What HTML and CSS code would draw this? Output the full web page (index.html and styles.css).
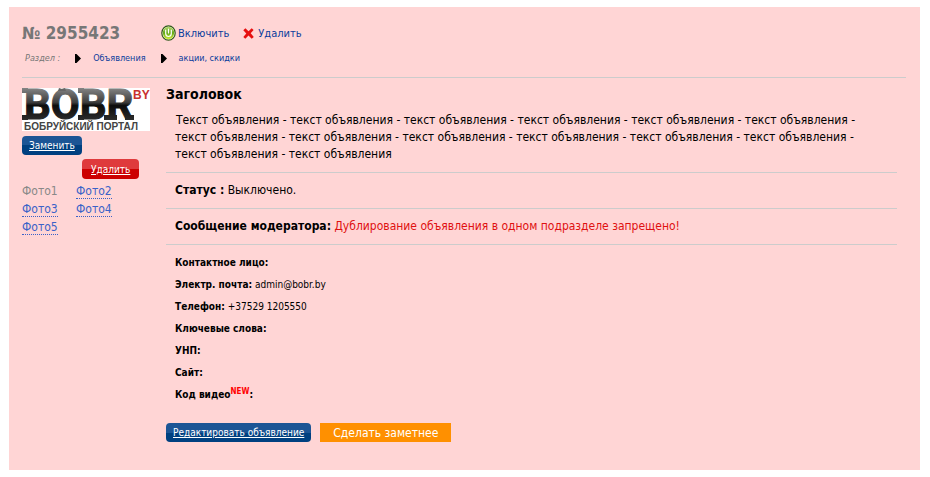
FILE: index.html
```html
<!DOCTYPE html>
<html lang="ru">

<head>
    <meta charset="UTF-8">
    <meta name="viewport" content="width=device-width, initial-scale=1.0">

    <title>Объявление № 2955423</title>
    <link rel="stylesheet" href="styles.css">
</head>

<body>

    <div class="card">
        <header class="card-header">
            <div class="title-row">
                <h1>№ 2955423</h1>
                <a href="#" class="action">
                    <svg class="icon-power" viewBox="0 0 15 16" aria-hidden="true">
                        <defs>
                            <linearGradient id="power" x1="0" y1="0" x2="0" y2="1">
                                <stop offset="0" stop-color="#b4d870" />
                                <stop offset="0.5" stop-color="#62a818" />
                                <stop offset="1" stop-color="#d2f03c" />
                            </linearGradient>
                        </defs>
                        <ellipse cx="7.5" cy="8" rx="6.7" ry="7.2" fill="#f4fbd0" stroke="#31571c" stroke-width="1.2" />
                        <ellipse cx="7.5" cy="8" rx="5.6" ry="6.2" fill="url(#power)" />
                        <path d="M4.7 5v3.6a2.8 2.9 0 0 0 5.6 0V5M7.5 4v4" fill="none" stroke="#fff" stroke-width="1.2" stroke-linecap="round" />
                    </svg>
                    Включить
                </a>
                <a href="#" class="action action-delete">
                    <svg class="icon-cross" viewBox="0 0 11 11" aria-hidden="true">
                        <path d="M2.4 0.3 5.5 3.2 8.7 0.3 10.6 1.9 7.7 5.3 10.8 9 8.7 10.8 5.5 7.6 2.3 10.8 0.3 8.9 3.3 5.4 0.3 2.2z" fill="#e60f0f" />
                    </svg>
                    Удалить
                </a>
            </div>
            <nav class="breadcrumbs">
                <span class="label">Раздел :</span>
                <svg class="arrow" viewBox="0 0 6 9" aria-hidden="true"><path d="M0 0h1.5L6 4.5 1.5 9H0z" /></svg>
                <a href="#">Объявления</a>
                <svg class="arrow" viewBox="0 0 6 9" aria-hidden="true"><path d="M0 0h1.5L6 4.5 1.5 9H0z" /></svg>
                <a href="#">акции, скидки</a>
            </nav>
        </header>

        <div class="card-body">
            <aside class="photos">
                <svg class="logo" viewBox="0 0 128 43" role="img" aria-label="BOBR.BY">
                    <defs>
                        <linearGradient id="metal" gradientUnits="userSpaceOnUse" x1="0" y1="0" x2="0" y2="32">
                            <stop offset="0" stop-color="#858585" />
                            <stop offset="0.45" stop-color="#3c3c3c" />
                            <stop offset="0.55" stop-color="#0c0c0c" />
                            <stop offset="1" stop-color="#2c2c2c" />
                        </linearGradient>
                    </defs>
                    <rect width="128" height="43" fill="#fff" />
                    <text class="logo-name" x="2" y="31" fill="url(#metal)" stroke="url(#metal)">BOBR</text>
                    <path d="M0 0h6v5H0zM56 0h6v5h-6zM0 27h6v5H0zM56 27h6v5h-6zM82 27h13v5H82zM103 27h9v5h-9z" fill="url(#metal)" />
                    <path d="M36 3 37 0l3 1 3-1 1 3z" fill="#666" />
                    <text class="logo-zone" x="111" y="11">BY</text>
                    <text class="logo-sub" x="2" y="42">БОБРУЙСКИЙ ПОРТАЛ</text>
                </svg>
                <button type="button" class="btn btn-blue">Заменить</button>
                <button type="button" class="btn btn-red">Удалить</button>
                <div class="photo-list">
                    <span>Фото1</span>
                    <a href="#">Фото2</a>
                    <a href="#">Фото3</a>
                    <a href="#">Фото4</a>
                    <a href="#">Фото5</a>
                </div>
            </aside>

            <main class="content">
                <h2>Заголовок</h2>
                <p class="text">Текст объявления - текст объявления - текст объявления - текст объявления - текст объявления - текст объявления - текст объявления - текст объявления - текст объявления - текст объявления - текст объявления - текст объявления - текст объявления - текст объявления</p>
                <p class="row"><strong>Статус :</strong> Выключено.</p>
                <p class="row"><strong>Сообщение модератора:</strong> <span class="warning">Дублирование объявления в одном подразделе запрещено!</span></p>
                <div class="details">
                    <p><strong>Контактное лицо:</strong></p>
                    <p><strong>Электр. почта:</strong> admin@bobr.by</p>
                    <p><strong>Телефон:</strong> +37529 1205550</p>
                    <p><strong>Ключевые слова:</strong></p>
                    <p><strong>УНП:</strong></p>
                    <p><strong>Сайт:</strong></p>
                    <p><strong>Код видео<sup>NEW</sup>:</strong></p>
                </div>
                <div class="buttons">
                    <button type="button" class="btn btn-blue">Редактировать объявление</button>
                    <button type="button" class="btn-orange">Сделать заметнее</button>
                </div>
            </main>
        </div>
    </div>

</body>

</html>
```

FILE: styles.css
```css
body {
    font-family: Tahoma, 'DejaVu Sans Condensed', 'DejaVu Sans', sans-serif;
    font-size: 12px;
    background-color: #ffffff;
    color: #000;
    margin: 7px 10px 7px 9px;
}

h1,
h2,
p {
    margin: 0;
}

a {
    color: #0a3c9c;
    text-decoration: none;
}

.card {
    background-color: #ffd5d5;
    padding: 16px 14px 28px 13px;
}

.card-header {
    border-bottom: 1px solid #ccc;
    padding-bottom: 12px;
}

.title-row {
    display: flex;
    align-items: center;
    height: 20px;
}

h1 {
    width: 139px;
    font-size: 17px;
    color: #777;
}

.action {
    display: flex;
    align-items: center;
    gap: 2px;
    font-size: 11px;
}

.action-delete {
    gap: 4px;
    margin-left: 14px;
}

.icon-power {
    width: 15px;
    height: 16px;
}

.icon-cross {
    width: 11px;
    height: 11px;
}

.breadcrumbs {
    display: flex;
    align-items: center;
    height: 14px;
    margin-top: 8px;
    padding-left: 3px;
    font-size: 9px;
}

.breadcrumbs .label {
    color: #777;
    font-style: italic;
}

.arrow {
    width: 6px;
    height: 9px;
    margin: 0 12px 0 15px;
}

.card-body {
    display: flex;
    gap: 16px;
    padding-top: 10px;
}

.photos {
    display: flex;
    flex-direction: column;
    flex-shrink: 0;
    align-items: flex-start;
    width: 128px;
}

.logo {
    width: 128px;
    height: 43px;
}

.logo-name {
    font-family: Roboto, sans-serif;
    font-size: 42px;
    font-weight: bold;
}

.logo-zone {
    font-family: 'Liberation Sans', Arial, sans-serif;
    font-size: 12px;
    font-weight: bold;
    fill: #c8322d;
}

.logo-sub {
    font-family: 'Liberation Sans', Arial, sans-serif;
    font-size: 10px;
    font-weight: bold;
    fill: #444;
}

.btn {
    height: 19px;
    padding: 0 7px;
    border: none;
    border-radius: 4px;
    color: #fff;
    font-family: inherit;
    font-size: 10px;
    text-decoration: underline;
    cursor: pointer;
}

.btn-blue {
    background: linear-gradient(#1c5595 50%, #004080 50%);
}

.btn-red {
    height: 20px;
    padding: 0 9px;
    background: linear-gradient(#df3a3c 50%, #cc0000 50%);
}

.photos .btn-blue {
    margin-top: 5px;
}

.photos .btn-red {
    margin: 4px 0 0 60px;
}

.photo-list {
    display: grid;
    grid-template-columns: 54px 54px;
    justify-items: start;
    row-gap: 3px;
    margin-top: 5px;
    line-height: 14px;
    color: #888;
}

.photo-list a {
    color: #3a62c8;
    border-bottom: 1px dotted #3a62c8;
}

.content {
    flex-grow: 1;
    margin-right: 9px;
}

h2 {
    font-size: 14px;
    line-height: 12px;
}

.text {
    padding: 12px 24px 9px 9px;
    line-height: 17px;
    text-indent: 1px;
}

.row {
    padding: 9px;
    border-top: 1px solid #ccc;
    line-height: 17px;
}

.warning {
    color: #e01010;
}

.details {
    border-top: 1px solid #ccc;
    padding: 7px 9px 0;
    font-size: 10px;
    line-height: 22px;
}

.details sup {
    color: #f00;
    font-size: 8px;
    line-height: 0;
}

.buttons {
    display: flex;
    gap: 9px;
    margin-top: 17px;
}

.btn-orange {
    height: 19px;
    padding: 0 13px;
    border: none;
    background-color: #ff9000;
    color: #fff;
    font-family: inherit;
    font-size: 12px;
    cursor: pointer;
}
```
